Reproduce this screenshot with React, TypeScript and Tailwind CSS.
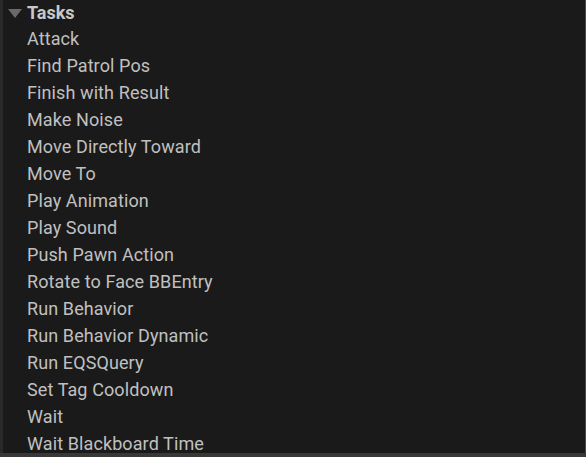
const items = [
  "Attack",
  "Find Patrol Pos",
  "Finish with Result",
  "Make Noise",
  "Move Directly Toward",
  "Move To",
  "Play Animation",
  "Play Sound",
  "Push Pawn Action",
  "Rotate to Face BBEntry",
  "Run Behavior",
  "Run Behavior Dynamic",
  "Run EQSQuery",
  "Set Tag Cooldown",
  "Wait",
  "Wait Blackboard Time",
];

export default function App() {
  return (
    <div
      className="w-[586px] h-[457px] bg-[#383838] flex flex-col overflow-hidden"
      style={{ fontFamily: "Roboto, 'Liberation Sans', sans-serif" }}
    >
      <div className="flex-1 min-h-0 flex border-l-[3px] border-[#2a2a2a] border-r border-r-[#4a4a4a] bg-[#1a1a1a] overflow-hidden">
        <div className="flex-1 flex flex-col">
          <div className="h-[25px] flex items-center pl-[5px] shrink-0">
            <svg width="14" height="9" viewBox="0 0 14 9" className="mr-[5px] mt-[2px]">
              <polygon points="0,0 14,0 7,9" fill="#6a6a6a" />
            </svg>
            <span className="text-[18px] font-bold text-[#c8c8c8] leading-none">Tasks</span>
          </div>
          {items.map((it) => (
            <div key={it} className="h-[27px] flex items-center pl-[24px] shrink-0">
              <span className="text-[18px] text-[#c0c0c0] leading-none tracking-[0.1px]">{it}</span>
            </div>
          ))}
        </div>
      </div>
      <div className="h-[4px] shrink-0" />
    </div>
  );
}
